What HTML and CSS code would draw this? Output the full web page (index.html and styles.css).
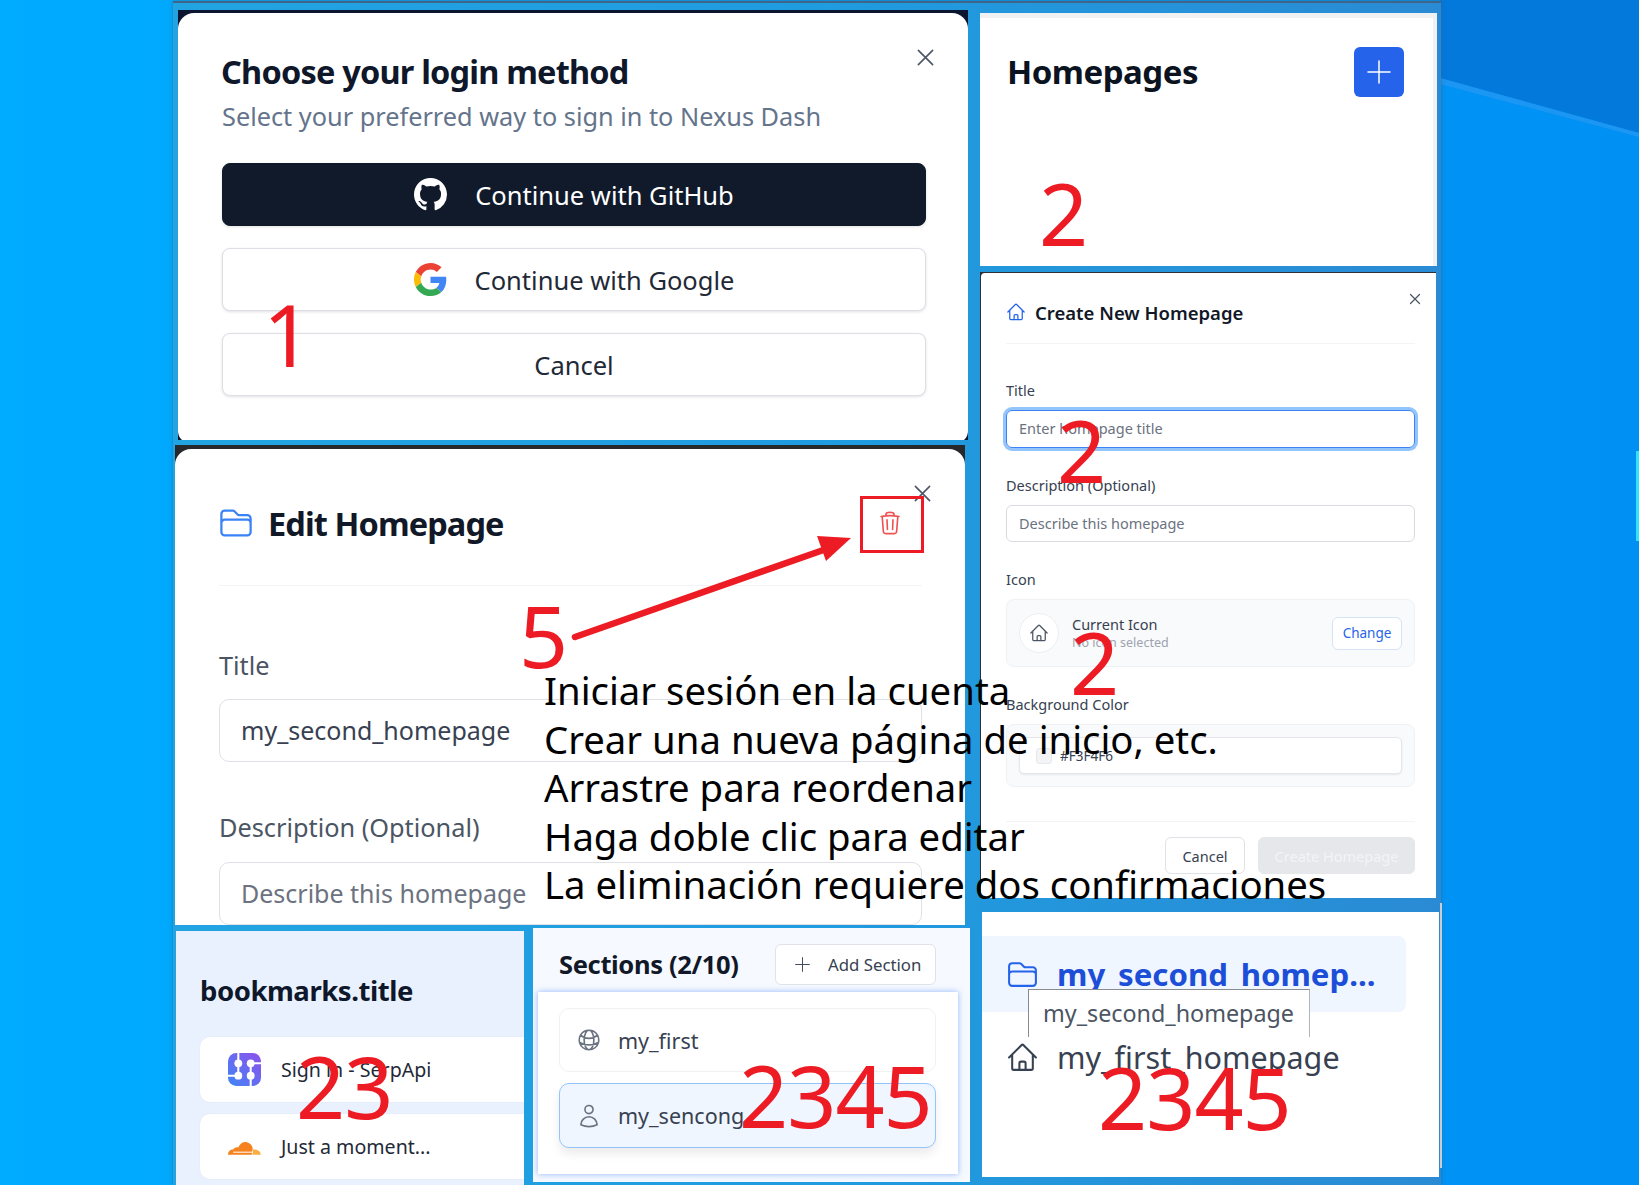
FILE: index.html
```html
<!DOCTYPE html>
<html>
<head>
  <meta charset="utf-8">
  <title>Nexus Dash notes</title>
  <link rel="stylesheet" href="styles.css">
</head>
<body>
  <!-- shared icons -->
  <svg class="sprite" xmlns="http://www.w3.org/2000/svg">
    <symbol id="i-home" viewBox="0 0 24 24"><path d="M2.25 12l8.954-8.955c.44-.439 1.152-.439 1.591 0L21.75 12M4.5 9.75v10.125c0 .621.504 1.125 1.125 1.125H9.75v-4.875c0-.621.504-1.125 1.125-1.125h2.25c.621 0 1.125.504 1.125 1.125V21h4.125c.621 0 1.125-.504 1.125-1.125V9.75M8.25 21h8.25"/></symbol>
    <symbol id="i-folder" viewBox="0 0 24 24"><path d="M2.25 12.75V12A2.25 2.25 0 014.5 9.75h15A2.25 2.25 0 0121.75 12v.75m-8.69-6.44l-2.12-2.12a1.5 1.5 0 00-1.061-.44H4.5A2.25 2.25 0 002.25 6v12a2.25 2.25 0 002.25 2.25h15A2.25 2.25 0 0021.75 18V9a2.25 2.25 0 00-2.25-2.25h-5.379a1.5 1.5 0 01-1.06-.44z"/></symbol>
    <symbol id="i-x" viewBox="0 0 24 24"><path d="M3 3l18 18M21 3L3 21"/></symbol>
    <symbol id="i-plus" viewBox="0 0 24 24"><path d="M12 1v22M1 12h22"/></symbol>
    <symbol id="i-trash" viewBox="0 0 24 24"><path d="M14.74 9l-.346 9m-4.788 0L9.26 9m9.968-3.21c.342.052.682.107 1.022.166m-1.022-.165L18.16 19.673a2.25 2.25 0 01-2.244 2.077H8.084a2.25 2.25 0 01-2.244-2.077L4.772 5.79m14.456 0a48.108 48.108 0 00-3.478-.397m-12 .562c.34-.059.68-.114 1.022-.165m0 0a48.11 48.11 0 013.478-.397m7.5 0v-.916c0-1.18-.91-2.164-2.09-2.201a51.964 51.964 0 00-3.32 0c-1.18.037-2.09 1.022-2.09 2.201v.916m7.5 0a48.667 48.667 0 00-7.5 0"/></symbol>
    <symbol id="i-globe" viewBox="0 0 24 24"><path d="M12 21a9.004 9.004 0 008.716-6.747M12 21a9.004 9.004 0 01-8.716-6.747M12 21c2.485 0 4.5-4.03 4.5-9S14.485 3 12 3m0 18c-2.485 0-4.5-4.03-4.5-9S9.515 3 12 3m0 0a8.997 8.997 0 017.843 4.582M12 3a8.997 8.997 0 00-7.843 4.582m15.686 0A11.953 11.953 0 0112 10.5c-2.998 0-5.74-1.1-7.843-2.918m15.686 0A8.959 8.959 0 0121 12c0 .778-.099 1.533-.284 2.253m0 0A17.919 17.919 0 0112 16.5c-3.162 0-6.133-.815-8.716-2.247m0 0A9.004 9.004 0 013 12c0-1.605.42-3.113 1.157-4.418"/></symbol>
    <symbol id="i-user" viewBox="0 0 24 24"><path d="M15.75 6a3.75 3.75 0 11-7.5 0 3.75 3.75 0 017.5 0zM4.501 20.118a7.5 7.5 0 0114.998 0A17.933 17.933 0 0112 21.75c-2.676 0-5.216-.584-7.499-1.632z"/></symbol>
  </svg>

  <div class="desktop">
    <svg class="wallpaper" viewBox="0 0 1639 1185" preserveAspectRatio="none">
      <polygon points="1440,0 1639,0 1639,133 1440,78" fill="#0479dc"/>
      <polygon points="1440,78 1639,133 1639,137 1440,84" fill="#1b96f2"/>
      <rect x="1636" y="451" width="3" height="90" fill="#2fe4ff"/>
    </svg>
    <div class="backing"></div>
    <div class="edge-line"></div>

    <!-- 1: login -->
    <section class="panel panel-login">
      <div class="login-sheet">
        <button class="close-btn login-close"><svg class="icon"><use href="#i-x"/></svg></button>
        <h2 class="login-title">Choose your login method</h2>
        <p class="login-sub">Select your preferred way to sign in to Nexus Dash</p>
        <div class="login-actions">
          <button class="login-btn login-btn-dark">
            <svg class="login-icon" viewBox="0 0 16 16"><path fill="#fff" d="M8 0C3.58 0 0 3.58 0 8c0 3.54 2.29 6.53 5.47 7.59.4.07.55-.17.55-.38 0-.19-.01-.82-.01-1.49-2.01.37-2.53-.49-2.69-.94-.09-.23-.48-.94-.82-1.13-.28-.15-.68-.52-.01-.53.63-.01 1.08.58 1.23.82.72 1.21 1.87.87 2.33.66.07-.52.28-.87.51-1.07-1.78-.2-3.64-.89-3.64-3.95 0-.87.31-1.59.82-2.15-.08-.2-.36-1.02.08-2.12 0 0 .67-.21 2.2.82.64-.18 1.32-.27 2-.27s1.36.09 2 .27c1.53-1.04 2.2-.82 2.2-.82.44 1.1.16 1.92.08 2.12.51.56.82 1.27.82 2.15 0 3.07-1.87 3.75-3.65 3.95.29.25.54.73.54 1.48 0 1.07-.01 1.93-.01 2.2 0 .21.15.46.55.38A8.01 8.01 0 0016 8c0-4.42-3.58-8-8-8z"/></svg>
            Continue with GitHub
          </button>
          <button class="login-btn">
            <svg class="login-icon" viewBox="0 0 48 48">
              <path fill="#EA4335" d="M24 9.5c3.54 0 6.71 1.22 9.21 3.6l6.85-6.85C35.9 2.38 30.47 0 24 0 14.62 0 6.51 5.38 2.56 13.22l7.98 6.19C12.43 13.72 17.74 9.5 24 9.5z"/>
              <path fill="#4285F4" d="M46.98 24.55c0-1.57-.15-3.09-.38-4.55H24v9.02h12.94c-.58 2.96-2.26 5.48-4.78 7.18l7.73 6c4.51-4.18 7.09-10.36 7.09-17.65z"/>
              <path fill="#FBBC05" d="M10.53 28.59c-.48-1.45-.76-2.99-.76-4.59s.27-3.14.76-4.59l-7.98-6.19C.92 16.46 0 20.12 0 24c0 3.88.92 7.54 2.56 10.78l7.97-6.19z"/>
              <path fill="#34A853" d="M24 48c6.48 0 11.93-2.13 15.89-5.81l-7.73-6c-2.15 1.45-4.92 2.3-8.16 2.3-6.26 0-11.57-4.22-13.47-9.91l-7.98 6.19C6.51 42.62 14.62 48 24 48z"/>
            </svg>
            Continue with Google
          </button>
          <button class="login-btn">Cancel</button>
        </div>
      </div>
    </section>

    <!-- 2: homepages header -->
    <section class="panel panel-homepages">
      <h2 class="homepages-title">Homepages</h2>
      <button class="add-btn"><svg class="icon"><use href="#i-plus"/></svg></button>
    </section>

    <!-- 2: create dialog -->
    <section class="panel panel-create">
      <div class="create-sheet">
        <button class="close-btn create-close"><svg class="icon"><use href="#i-x"/></svg></button>
        <header class="create-head">
          <svg class="icon create-home"><use href="#i-home"/></svg>
          <h3>Create New Homepage</h3>
        </header>
        <label class="create-label create-label-first">Title</label>
        <div class="create-input create-input-focus">Enter homepage title</div>
        <label class="create-label">Description (Optional)</label>
        <div class="create-input">Describe this homepage</div>
        <label class="create-label">Icon</label>
        <div class="icon-box">
          <span class="icon-circle"><svg class="icon"><use href="#i-home"/></svg></span>
          <div class="icon-text">
            <div class="icon-name">Current Icon</div>
            <div class="icon-note">No icon selected</div>
          </div>
          <button class="change-btn">Change</button>
        </div>
        <label class="create-label">Background Color</label>
        <div class="color-box">
          <div class="color-field"><span class="color-swatch"></span>#F3F4F6</div>
        </div>
        <footer class="create-foot">
          <button class="foot-btn">Cancel</button>
          <button class="foot-btn foot-btn-off">Create Homepage</button>
        </footer>
      </div>
    </section>

    <!-- 5: edit dialog -->
    <section class="panel panel-edit">
      <div class="edit-sheet">
        <button class="close-btn edit-close"><svg class="icon"><use href="#i-x"/></svg></button>
        <header class="edit-head">
          <svg class="icon edit-folder"><use href="#i-folder"/></svg>
          <h2>Edit Homepage</h2>
          <svg class="icon edit-trash"><use href="#i-trash"/></svg>
        </header>
        <label class="edit-label edit-label-first">Title</label>
        <div class="edit-input">my_second_homepage</div>
        <label class="edit-label">Description (Optional)</label>
        <div class="edit-input edit-input-empty">Describe this homepage</div>
      </div>
    </section>

    <!-- 23: bookmarks -->
    <section class="panel panel-bookmarks">
      <h2 class="bookmarks-title">bookmarks.title</h2>
      <div class="bookmark-card">
        <svg class="bookmark-icon" viewBox="0 0 32 32">
          <defs><linearGradient id="serp" x1="0" y1="1" x2="1" y2="0"><stop offset="0" stop-color="#3f86f5"/><stop offset="1" stop-color="#8f50ec"/></linearGradient></defs>
          <rect x="0" y="0" width="32" height="32" rx="8" fill="url(#serp)"/>
          <path d="M10 0v22M22 32V10M22 10h10M0 22h10" stroke="#fff" stroke-width="2"/>
          <circle cx="10" cy="10" r="3.8" fill="#fff"/><circle cx="22" cy="10" r="3.8" fill="#fff"/>
          <circle cx="10" cy="22" r="3.8" fill="#fff"/><circle cx="22" cy="22" r="3.8" fill="#fff"/>
        </svg>
        Sign in - SerpApi
      </div>
      <div class="bookmark-card">
        <svg class="bookmark-icon" viewBox="0 0 32 32">
          <path fill="#f6821f" d="M0 24c0-3 2-5 5-5 1-2 3-3 5-2 1.500-4 5-6 9-5 3 1 4.500 3 5 6l-1 6z"/>
          <path fill="#fbad41" d="M23.500 24c.8-2 .8-4 .3-5 3.500-.5 8 1 8 5z"/>
          <path fill="#fff" d="M5 21h19v1H5z"/>
        </svg>
        Just a moment...
      </div>
    </section>

    <!-- 2345: sections -->
    <section class="panel panel-sections">
      <header class="sections-head">
        <h3>Sections (2/10)</h3>
        <button class="section-add"><svg class="icon"><use href="#i-plus"/></svg>Add Section</button>
      </header>
      <div class="sections-list">
        <div class="section-row"><svg class="icon"><use href="#i-globe"/></svg>my_first</div>
        <div class="section-row section-row-on"><svg class="icon"><use href="#i-user"/></svg>my_sencong</div>
      </div>
    </section>

    <!-- 2345: sidebar nav -->
    <section class="panel panel-nav">
      <div class="nav-row nav-row-on"><svg class="icon"><use href="#i-folder"/></svg>my_second_homep...</div>
      <div class="nav-tip">my_second_homepage</div>
      <div class="nav-row nav-row-plain"><svg class="icon"><use href="#i-home"/></svg>my_first_homepage</div>
    </section>

    <!-- annotations laid over the shots -->
    <span class="mark mark-1">1</span>
    <span class="mark mark-2a">2</span>
    <span class="mark mark-2b">2</span>
    <span class="mark mark-2c">2</span>
    <span class="mark mark-5">5</span>
    <span class="mark mark-23">23</span>
    <span class="mark mark-2345a">2345</span>
    <span class="mark mark-2345b">2345</span>
    <div class="trash-frame"></div>
    <svg class="arrow" viewBox="0 0 300 120">
      <path d="M5 105L262 15" stroke="#ed1c24" stroke-width="6.500" stroke-linecap="round"/>
      <polygon points="247,4 281,6 256,29" fill="#ed1c24"/>
    </svg>
    <div class="notes">
      <div>Iniciar sesión en la cuenta</div>
      <div>Crear una nueva página de inicio, etc.</div>
      <div>Arrastre para reordenar</div>
      <div>Haga doble clic para editar</div>
      <div>La eliminación requiere dos confirmaciones</div>
    </div>
  </div>
</body>
</html>
```
FILE: styles.css
```css
* {
  box-sizing: border-box;
}
body {
  margin: 0;
  font-family: "Noto Sans", "Open Sans", sans-serif;
  color: #111827;
  overflow: hidden;
}
h2, h3, p {
  margin: 0;
}
button {
  font-family: inherit;
  background: none;
  border: none;
  padding: 0;
}
.sprite {
  position: absolute;
  width: 0;
  height: 0;
}
.icon {
  display: block;
  fill: none;
  stroke: currentColor;
  stroke-width: 1.5;
  stroke-linecap: round;
  stroke-linejoin: round;
  flex: none;
}

/* desktop and the strip behind the shots */
.desktop {
  position: relative;
  width: 1639px;
  height: 1185px;
  overflow: hidden;
  background: linear-gradient(90deg, #00acff 0%, #00a4fb 30%, #0090f4 100%);
}
.wallpaper {
  position: absolute;
  inset: 0;
  width: 100%;
  height: 100%;
}
.backing {
  position: absolute;
  left: 173px;
  top: 1px;
  width: 1268px;
  height: 1184px;
  background: linear-gradient(90deg, #22a4e2 0%, #1f9ce0 50%, #2a8bd4 100%);
  border-top: 2px solid #3f6688;
  box-shadow: 0 0 4px rgba(60, 90, 120, 0.6);
}
.edge-line {
  position: absolute;
  left: 1440px;
  top: 903px;
  width: 2px;
  height: 265px;
  background: #c9ccd2;
}
.panel {
  position: absolute;
  overflow: hidden;
  background: #fff;
}
.close-btn {
  position: absolute;
  color: #4b5563;
}
.close-btn .icon {
  width: 100%;
  height: 100%;
  stroke-width: 2;
}

/* 1 login */
.panel-login {
  left: 178px;
  top: 10px;
  width: 790px;
  height: 430px;
  background: #0c1530;
}
.login-sheet {
  position: relative;
  height: 100%;
  margin-top: 3px;
  padding: 37px 44px 0;
  background: #fff;
  border-radius: 16px 16px 12px 12px;
}
.login-close {
  top: 35px;
  right: 33px;
  width: 19px;
  height: 19px;
}
.login-title {
  font-size: 32.5px;
  line-height: 44px;
  font-weight: 700;
  color: #0f172a;
  letter-spacing: -0.8px;
  margin-left: -1px;
}
.login-sub {
  font-size: 25.3px;
  line-height: 34px;
  color: #64748b;
  margin-top: 5px;
}
.login-actions {
  display: flex;
  flex-direction: column;
  gap: 22px;
  margin-top: 30px;
}
.login-btn {
  display: flex;
  align-items: center;
  justify-content: center;
  gap: 28px;
  width: 704px;
  height: 63px;
  font-size: 25.5px;
  color: #1f2937;
  background: #fff;
  border: 1px solid #dcdfe6;
  border-radius: 8px;
  box-shadow: 0 1px 3px rgba(0, 0, 0, 0.12);
}
.login-btn-dark {
  background: #111a2b;
  border-color: #111a2b;
  color: #fff;
}
.login-icon {
  width: 33px;
  height: 33px;
}

/* 2 homepages */
.panel-homepages {
  left: 980px;
  top: 13px;
  width: 457px;
  height: 253px;
  display: flex;
  justify-content: space-between;
  align-items: flex-start;
  padding: 30px 33px 0 27px;
  border-top: 5px solid #f0f1f3;
  border-right: 4px solid #f0f1f3;
}
.homepages-title {
  font-size: 33px;
  line-height: 48px;
  font-weight: 700;
  color: #0b1220;
  letter-spacing: -0.5px;
}
.add-btn {
  width: 50px;
  height: 50px;
  margin-top: -1px;
  margin-right: -4px;
  display: flex;
  align-items: center;
  justify-content: center;
  background: #2563eb;
  color: #fff;
  border-radius: 6px;
}
.add-btn .icon {
  width: 24px;
  height: 24px;
}

/* 2 create dialog */
.panel-create {
  left: 980px;
  top: 272px;
  width: 456px;
  height: 626px;
  background: #2c3036;
}
.create-sheet {
  position: relative;
  height: 100%;
  margin-top: 1px;
  margin-left: 1px;
  padding: 0 21px 0 25px;
  background: #fff;
  border-radius: 4px 0 0 0;
}
.create-close {
  top: 20px;
  right: 15px;
  width: 12px;
  height: 12px;
}
.create-close .icon {
  stroke-width: 2.5;
}
.create-head {
  display: flex;
  align-items: center;
  gap: 9px;
  height: 71px;
  padding-top: 8px;
  border-bottom: 1px solid #f3f4f6;
}
.create-head h3 {
  font-size: 18.5px;
  font-weight: 600;
  color: #111827;
}
.create-home {
  width: 20px;
  height: 20px;
  color: #2563eb;
}
.create-label {
  display: block;
  font-size: 14.5px;
  line-height: 20px;
  color: #374151;
  margin-top: 27px;
  margin-bottom: 10px;
}
.create-label-first {
  margin-top: 36px;
  margin-bottom: 10px;
}
.create-input {
  height: 37px;
  line-height: 35px;
  padding-left: 12px;
  font-size: 14.5px;
  color: #6b7280;
  border: 1px solid #d8dbe0;
  border-radius: 6px;
}
.create-input-focus {
  height: 38px;
  border: 1px solid #3b82f6;
  box-shadow: 0 0 0 3px #93c5fd;
}
.icon-box {
  display: flex;
  align-items: center;
  height: 68px;
  padding: 0 12px;
  background: #f9fafb;
  border: 1px solid #f0f1f3;
  border-radius: 8px;
}
.icon-circle {
  width: 40px;
  height: 40px;
  display: flex;
  align-items: center;
  justify-content: center;
  margin-right: 13px;
  background: #fff;
  border: 1px solid #eceef1;
  border-radius: 50%;
  color: #4b5563;
}
.icon-circle .icon {
  width: 20px;
  height: 20px;
}
.icon-text {
  flex: 1;
}
.icon-name {
  font-size: 14.5px;
  line-height: 19px;
  color: #374151;
}
.icon-note {
  font-size: 12.5px;
  line-height: 17px;
  color: #9ca3af;
}
.change-btn {
  width: 70px;
  height: 33px;
  font-size: 13.5px;
  color: #2563eb;
  background: #fff;
  border: 1px solid #d7e3f6;
  border-radius: 6px;
}
.color-box {
  height: 63px;
  padding: 12px;
  background: #f9fafb;
  border: 1px solid #f0f1f3;
  border-radius: 8px;
}
.color-field {
  display: flex;
  align-items: center;
  gap: 8px;
  height: 37px;
  padding-left: 16px;
  font-size: 13.5px;
  color: #374151;
  background: #fff;
  border: 1px solid #e5e7eb;
  border-radius: 5px;
  box-shadow: 0 1px 2px rgba(0, 0, 0, 0.08);
}
.color-swatch {
  width: 16px;
  height: 16px;
  background: #f3f4f6;
  border: 1px solid #e5e7eb;
  border-radius: 3px;
}
.create-foot {
  display: flex;
  justify-content: flex-end;
  gap: 13px;
  margin-top: 34px;
  padding-top: 15px;
  border-top: 1px solid #f3f4f6;
}
.foot-btn {
  width: 80px;
  height: 37px;
  font-size: 14.5px;
  color: #374151;
  background: #fff;
  border: 1px solid #dfe2e6;
  border-radius: 6px;
}
.foot-btn-off {
  width: 157px;
  color: #f3f4f6;
  background: #e5e7eb;
  border-color: #e5e7eb;
}

/* 5 edit dialog */
.panel-edit {
  left: 175px;
  top: 445px;
  width: 790px;
  height: 480px;
  background: #26282c;
}
.edit-sheet {
  position: relative;
  height: 100%;
  margin-top: 4px;
  padding: 0 43px 0 44px;
  background: #fff;
  border-radius: 16px 16px 0 0;
}
.edit-close {
  top: 35px;
  right: 33px;
  width: 19px;
  height: 19px;
}
.edit-head {
  display: flex;
  align-items: center;
  gap: 15px;
  height: 137px;
  padding-top: 12px;
  border-bottom: 1px solid #f3f4f6;
}
.edit-head h2 {
  flex: 1;
  font-size: 32.5px;
  font-weight: 700;
  color: #111827;
  letter-spacing: -0.9px;
}
.edit-folder {
  width: 36px;
  height: 36px;
  margin-left: -1px;
  margin-right: -1px;
  color: #3b82f6;
}
.edit-trash {
  width: 26px;
  height: 26px;
  margin-right: 19px;
  color: #f05252;
}
.edit-label {
  display: block;
  font-size: 25.3px;
  line-height: 36px;
  color: #4b5563;
  margin-top: 47px;
  margin-bottom: 17px;
}
.edit-label-first {
  margin-top: 61px;
  margin-bottom: 16px;
}
.edit-input {
  height: 63px;
  line-height: 60px;
  padding-left: 21px;
  font-size: 25px;
  color: #374151;
  border: 1px solid #dfe1e7;
  border-radius: 10px;
}
.edit-input-empty {
  color: #6b7280;
}

/* 23 bookmarks */
.panel-bookmarks {
  left: 176px;
  top: 931px;
  width: 348px;
  height: 254px;
  padding: 36px 0 0 24px;
  background: #e9f1fe;
}
.bookmarks-title {
  font-size: 27.5px;
  line-height: 48px;
  font-weight: 700;
  color: #0f172a;
  letter-spacing: -0.45px;
  margin-bottom: 22px;
}
.bookmark-card {
  display: flex;
  align-items: center;
  gap: 20px;
  width: 360px;
  height: 65px;
  margin-bottom: 12px;
  padding-left: 28px;
  font-size: 19.6px;
  color: #1f2937;
  background: #fff;
  border-radius: 10px;
  box-shadow: 0 0 2px rgba(0, 0, 0, 0.05);
}
.bookmark-icon {
  width: 33px;
  height: 33px;
  flex: none;
}

/* 2345 sections */
.panel-sections {
  left: 533px;
  top: 928px;
  width: 437px;
  height: 254px;
  background: #f6f9ff;
}
.sections-head {
  display: flex;
  justify-content: space-between;
  align-items: center;
  height: 58px;
  margin-top: 7px;
  padding: 0 34px 0 26px;
}
.sections-head h3 {
  font-size: 25.5px;
  font-weight: 700;
  color: #111827;
  letter-spacing: -0.35px;
}
.section-add {
  display: flex;
  align-items: center;
  gap: 18px;
  width: 161px;
  height: 41px;
  padding-left: 19px;
  font-size: 16.8px;
  color: #374151;
  background: #fff;
  border: 1px solid #dfe2e6;
  border-radius: 6px;
}
.section-add .icon {
  width: 15px;
  height: 15px;
}
.sections-list {
  display: flex;
  flex-direction: column;
  gap: 11px;
  width: 420px;
  height: 182px;
  margin-left: 5px;
  margin-top: -1px;
  padding: 16px 22px 0 21px;
  background: #fff;
  box-shadow: 0 0 6px rgba(59, 130, 246, 0.55);
}
.section-row {
  display: flex;
  align-items: center;
  gap: 16px;
  height: 64px;
  padding-left: 16px;
  font-size: 21.5px;
  color: #374151;
  background: #fff;
  border: 1px solid #f0f1f3;
  border-radius: 10px;
}
.section-row .icon {
  width: 26px;
  height: 26px;
  color: #6b7280;
}
.section-row-on {
  height: 65px;
  background: #eff6ff;
  border-color: #93c5fd;
  box-shadow: 0 6px 10px rgba(0, 0, 0, 0.08);
}

/* 2345 nav */
.panel-nav {
  left: 982px;
  top: 912px;
  width: 457px;
  height: 265px;
  padding-top: 24px;
}
.nav-row {
  display: flex;
  align-items: center;
  gap: 18px;
  height: 76px;
  padding-left: 24px;
  font-size: 31.2px;
  color: #374151;
}
.nav-row .icon {
  width: 33px;
  height: 33px;
}
.nav-row-on {
  width: 424px;
  font-weight: 700;
  color: #1d4ed8;
  background: #eff6ff;
  border-radius: 0 8px 8px 0;
}
.nav-row-plain {
  height: 46px;
  margin-top: 22px;
  font-size: 30.5px;
}
.nav-row-on .icon {
  color: #2563eb;
}
.nav-tip {
  position: absolute;
  left: 46px;
  top: 77px;
  width: 282px;
  height: 48px;
  padding-left: 14px;
  font-size: 23.3px;
  line-height: 46px;
  color: #4b5563;
  background: #fff;
  border: 1px solid #888b92;
  border-bottom: none;
  border-right-color: #b3b5ba;
}

/* red annotations and note text */
.mark {
  position: absolute;
  font-size: 86px;
  line-height: 90px;
  color: #ed1c24;
  letter-spacing: -1px;
}
.mark-1 { left: 263px; top: 289px; }
.mark-2a { left: 1039px; top: 168px; }
.mark-2b { left: 1057px; top: 405px; }
.mark-2c { left: 1070px; top: 617px; }
.mark-5 { left: 519px; top: 590px; }
.mark-23 { left: 296px; top: 1041px; }
.mark-2345a { left: 739px; top: 1050px; }
.mark-2345b { left: 1098px; top: 1052px; }
.trash-frame {
  position: absolute;
  left: 860px;
  top: 496px;
  width: 64px;
  height: 57px;
  border: 3px solid #ed1c24;
}
.arrow {
  position: absolute;
  left: 570px;
  top: 532px;
  width: 300px;
  height: 120px;
}
.notes {
  position: absolute;
  left: 544px;
  top: 666px;
  font-size: 38.3px;
  line-height: 48.5px;
  color: #000;
  white-space: nowrap;
}
```
